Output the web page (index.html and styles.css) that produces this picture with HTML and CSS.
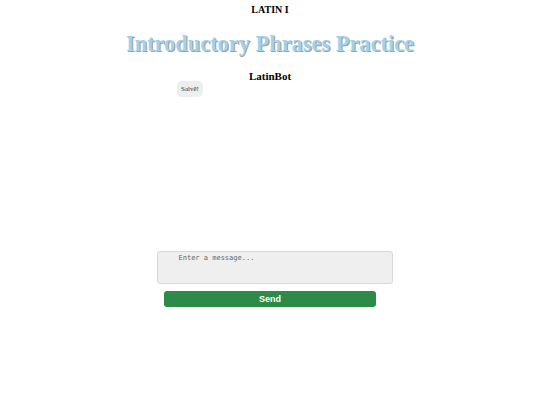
FILE: index.html
```html
<!DOCTYPE html>
<html>
<head>
<meta charset="utf-8">
<link rel="stylesheet" href="styles.css">
</head>
<body>
<div class="page">
  <div class="course">LATIN I</div>
  <h1 class="title">Introductory Phrases Practice</h1>
  <div class="botname">LatinBot</div>
  <div class="chat">
    <div class="bubble">Salvē!</div>
  </div>
  <div class="composer">
    <textarea class="input" placeholder="Enter a message..."></textarea>
    <button class="send">Send</button>
  </div>
</div>
</body>
</html>
```

FILE: styles.css
```css
html, body {
  margin: 0;
  padding: 0;
  background: #ffffff;
}
.page {
  width: 540px;
  display: flex;
  flex-direction: column;
  align-items: center;
  font-family: "Liberation Serif", "Times New Roman", serif;
}
.course {
  margin-top: 4px;
  font-size: 10px;
  font-weight: bold;
  line-height: 12px;
  color: #000;
}
.title {
  margin: 15px 0 0 0;
  font-size: 22.4px;
  line-height: 26px;
  font-weight: bold;
  color: #a3d2e8;
  text-shadow: 1px 1px 0 #a0a0a0;
}
.botname {
  margin-top: 13px;
  font-size: 11px;
  font-weight: bold;
  line-height: 13px;
  color: #000;
}
.chat {
  width: 186px;
  height: 168px;
  display: flex;
  flex-direction: column;
  align-items: flex-start;
}
.bubble {
  margin-top: -2px;
  background: #eeeeee;
  border-radius: 5px;
  padding: 4px 4px;
  font-family: "Liberation Serif", "Times New Roman", serif;
  font-weight: normal;
  font-size: 7px;
  line-height: 8px;
  color: #333;
}
.composer {
  display: flex;
  flex-direction: column;
  align-items: center;
  width: 236px;
  margin-left: 9px;
}
.input {
  box-sizing: border-box;
  width: 236px;
  height: 33px;
  margin: 0;
  padding: 2px 21px;
  border: 1px solid #d8d8d8;
  border-radius: 3px;
  background: #efefef;
  font-family: "DejaVu Sans Mono", monospace;
  font-size: 7px;
  line-height: 9px;
  resize: none;
  outline: none;
}
.input::placeholder {
  color: #666;
}
.send {
  margin-top: 7px;
  margin-right: 9px;
  width: 212px;
  height: 16px;
  border: none;
  border-radius: 3px;
  background: #2e8b47;
  color: #ffffff;
  font-family: "Liberation Sans", Arial, sans-serif;
  font-weight: bold;
  font-size: 9px;
  line-height: 16px;
  padding: 0;
}
```
